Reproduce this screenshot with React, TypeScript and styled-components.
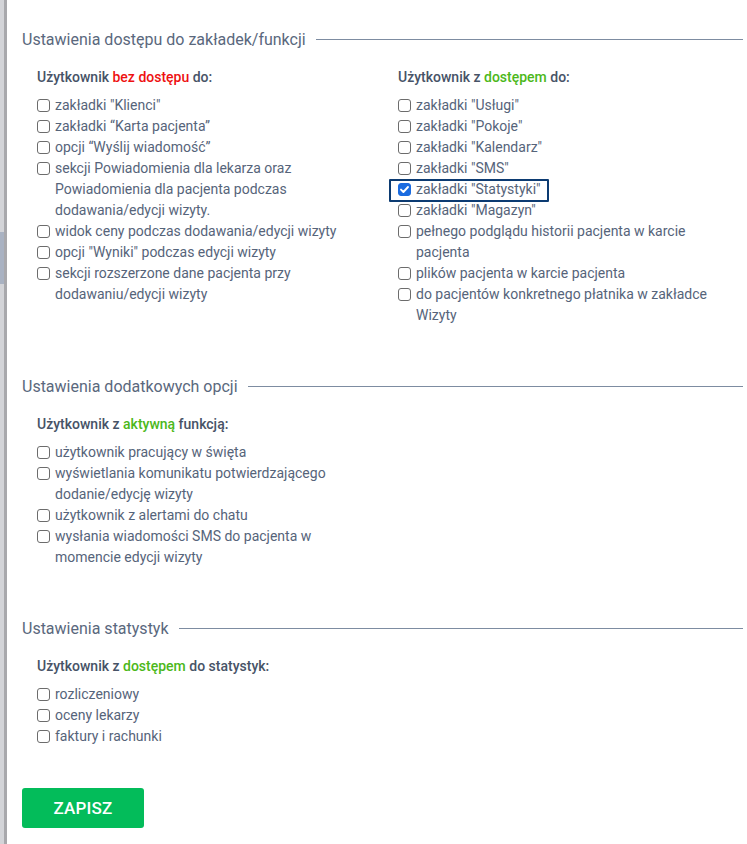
import React, { FC } from 'react';
import styled, { createGlobalStyle, css } from 'styled-components';

const GlobalStyle = createGlobalStyle`
  html, body {
    margin: 0;
    padding: 0;
    background: #ffffff;
  }
  body {
    font-family: Roboto, 'Liberation Sans', Arial, sans-serif;
    -webkit-font-smoothing: antialiased;
  }
`;

type Item = { label: string; checked?: boolean; focused?: boolean };

const noAccess: Item[] = [
  { label: 'zakładki "Klienci"' },
  { label: 'zakładki “Karta pacjenta”' },
  { label: 'opcji “Wyślij wiadomość”' },
  { label: 'sekcji Powiadomienia dla lekarza oraz Powiadomienia dla pacjenta podczas dodawania/edycji wizyty.' },
  { label: 'widok ceny podczas dodawania/edycji wizyty' },
  { label: 'opcji "Wyniki" podczas edycji wizyty' },
  { label: 'sekcji rozszerzone dane pacjenta przy dodawaniu/edycji wizyty' },
];

const withAccess: Item[] = [
  { label: 'zakładki "Usługi"' },
  { label: 'zakładki "Pokoje"' },
  { label: 'zakładki "Kalendarz"' },
  { label: 'zakładki "SMS"' },
  { label: 'zakładki "Statystyki"', checked: true, focused: true },
  { label: 'zakładki "Magazyn"' },
  { label: 'pełnego podglądu historii pacjenta w karcie pacjenta' },
  { label: 'plików pacjenta w karcie pacjenta' },
  { label: 'do pacjentów konkretnego płatnika w zakładce Wizyty' },
];

const extraOptions: Item[] = [
  { label: 'użytkownik pracujący w święta' },
  { label: 'wyświetlania komunikatu potwierdzającego dodanie/edycję wizyty' },
  { label: 'użytkownik z alertami do chatu' },
  { label: 'wysłania wiadomości SMS do pacjenta w momencie edycji wizyty' },
];

const statsOptions: Item[] = [
  { label: 'rozliczeniowy' },
  { label: 'oceny lekarzy' },
  { label: 'faktury i rachunki' },
];

const Page = styled.div`
  display: flex;
  min-height: 844px;
`;

// strip of the page behind the modal
const Backdrop = styled.div`
  flex: 0 0 4px;
  background: linear-gradient(
    to bottom,
    #d3d4d8 0,
    #d3d4d8 232px,
    #a9b2c2 232px,
    #a9b2c2 284px,
    #d3d4d8 284px
  );
  border-right: 3px solid #a8a8ac;
`;

const Panel = styled.div`
  flex: 1;
  background: #ffffff;
  padding: 29px 4px 16px 15px;
`;

const Section = styled.section<{ $gap: number }>`
  margin-bottom: ${(p) => p.$gap}px;
`;

const Legend = styled.div`
  display: flex;
  align-items: center;
  gap: 10px;
  height: 20px;
  font-size: 16px;
  color: #5a687d;
  white-space: nowrap;

  &::after {
    content: '';
    flex: 1;
    height: 1px;
    background: #7d8ca1;
  }
`;

const Columns = styled.div`
  display: grid;
  grid-template-columns: 361px 1fr;
  padding: 0 0 0 15px;
  margin-top: 18px;
`;

const Column = styled.div<{ $wide?: boolean }>`
  display: flex;
  flex-direction: column;
  padding-right: ${(p) => (p.$wide ? 6 : 20)}px;
`;

const Subtitle = styled.div`
  font-size: 14px;
  font-weight: 500;
  line-height: 20px;
  color: #475367;
  margin-bottom: 8px;
`;

const Accent = styled.span<{ $tone: 'red' | 'green' }>`
  color: ${(p) => (p.$tone === 'red' ? '#ee1111' : '#4cb81a')};
`;

const Row = styled.label<{ $focused?: boolean }>`
  display: flex;
  align-items: flex-start;
  gap: 5px;
  font-size: 14px;
  line-height: 21px;
  color: #56647a;
  cursor: pointer;

  ${(p) =>
    p.$focused &&
    css`
      position: relative;
      width: fit-content;

      &::after {
        content: '';
        position: absolute;
        left: -9px;
        right: -8px;
        top: 0;
        bottom: -2px;
        border: 2.5px solid #0c3b72;
        border-radius: 1px;
      }
    `}
`;

const Box = styled.span<{ $checked?: boolean }>`
  flex: 0 0 auto;
  box-sizing: border-box;
  width: 13px;
  height: 13px;
  margin-top: 4px;
  border-radius: 3px;
  border: 1px solid ${(p) => (p.$checked ? '#1a6be0' : '#6c6c6c')};
  background: ${(p) => (p.$checked ? '#1a6be0' : '#ffffff')};
  display: flex;
  align-items: center;
  justify-content: center;
`;

const Button = styled.button`
  display: block;
  width: 122px;
  height: 40px;
  border: none;
  border-radius: 3px;
  background: #03bc5a;
  color: #ffffff;
  font-family: inherit;
  font-size: 17px;
  font-weight: 500;
  letter-spacing: 0.2px;
  cursor: pointer;
`;

const CheckRow: FC<Item> = ({ label, checked, focused }) => (
  <Row $focused={focused}>
    <Box $checked={checked}>
      {checked && (
        <svg width="11" height="11" viewBox="0 0 11 11">
          <path d="M2 5.6 4.4 8 9 3" fill="none" stroke="#ffffff" strokeWidth="1.9" strokeLinecap="round" strokeLinejoin="round" />
        </svg>
      )}
    </Box>
    <span>{label}</span>
  </Row>
);

const List: FC<{ items: Item[] }> = ({ items }) => (
  <>
    {items.map((it) => (
      <CheckRow key={it.label} {...it} />
    ))}
  </>
);

const App: FC = () => (
  <Page>
    <GlobalStyle />
    <Backdrop />
    <Panel>
      <Section $gap={50}>
        <Legend>Ustawienia dostępu do zakładek/funkcji</Legend>
        <Columns>
          <Column>
            <Subtitle>
              Użytkownik <Accent $tone="red">bez dostępu</Accent> do:
            </Subtitle>
            <List items={noAccess} />
          </Column>
          <Column $wide>
            <Subtitle>
              Użytkownik z <Accent $tone="green">dostępem</Accent> do:
            </Subtitle>
            <List items={withAccess} />
          </Column>
        </Columns>
      </Section>

      <Section $gap={50}>
        <Legend>Ustawienia dodatkowych opcji</Legend>
        <Columns>
          <Column>
            <Subtitle>
              Użytkownik z <Accent $tone="green">aktywną</Accent> funkcją:
            </Subtitle>
            <List items={extraOptions} />
          </Column>
        </Columns>
      </Section>

      <Section $gap={41}>
        <Legend>Ustawienia statystyk</Legend>
        <Columns>
          <Column>
            <Subtitle>
              Użytkownik z <Accent $tone="green">dostępem</Accent> do statystyk:
            </Subtitle>
            <List items={statsOptions} />
          </Column>
        </Columns>
      </Section>

      <Button type="button">ZAPISZ</Button>
    </Panel>
  </Page>
);

export default App;
